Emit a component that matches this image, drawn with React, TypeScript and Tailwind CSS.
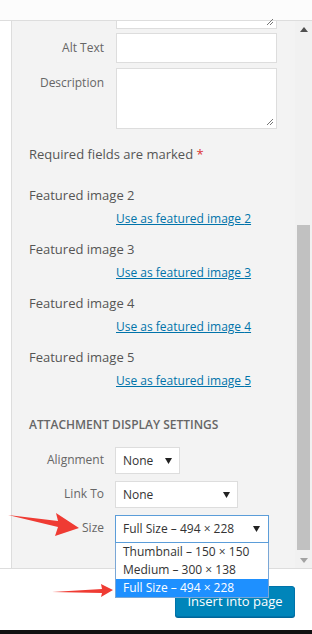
import React from 'react'

const font = { fontFamily: '"Open Sans", "Noto Sans", sans-serif' }

const Caret = () => (
    <svg width="7" height="6" viewBox="0 0 7 6" className="shrink-0">
        <path d="M0 0 H7 L3.5 6 Z" fill="#222" />
    </svg>
)

const Grip = () => (
    <svg width="7" height="7" viewBox="0 0 7 7" className="absolute right-[3px] bottom-[3px]">
        <path d="M1 7 L7 1 M4 7 L7 4" stroke="#777" strokeWidth="1" />
    </svg>
)

const Row = ({ label, children, top = 'pt-[6px]' }: { label: string; children: React.ReactNode; top?: string }) => (
    <div className="flex items-start">
        <div className={`w-[75px] text-right text-[12px] leading-[18px] text-[#666] ${top}`}>{label}</div>
        <div className="ml-[12px]">{children}</div>
    </div>
)

const Featured = ({ n }: { n: number }) => (
    <div className="flex flex-col">
        <div className="text-[13px] leading-[18px] text-[#555]">Featured image {n}</div>
        <a className="ml-[87px] mt-[6px] text-[12px] leading-[18px] text-[#0073aa] underline">Use as featured image {n}</a>
    </div>
)

const App = () => {
    return (
        <div className="relative w-[312px] h-[634px] bg-white overflow-hidden" style={font}>
            {/* top bar */}
            <div className="h-[21px] bg-[#fcfcfc] border-b border-[#dddddd]"></div>

            <div className="flex h-[547px]">
                <div className="w-[12px] bg-white border-r border-[#dddddd]"></div>

                {/* panel */}
                <div className="flex-1 bg-[#f3f3f3] pl-[17px]">
                    <div className="relative ml-[87px] w-[161px] h-[8px] bg-white border border-t-0 border-[#dddddd]">
                        <Grip />
                    </div>

                    <div className="mt-[4px] flex flex-col gap-[5px]">
                        <Row label="Alt Text">
                            <div className="w-[161px] h-[30px] bg-white border border-[#dddddd]"></div>
                        </Row>
                        <Row label="Description">
                            <div className="relative w-[161px] h-[61px] bg-white border border-[#dddddd]">
                                <Grip />
                            </div>
                        </Row>
                    </div>

                    <div className="mt-[16px] text-[13px] leading-[18px] text-[#555]">
                        Required fields are marked <span className="text-[#dc3232]">*</span>
                    </div>

                    <div className="mt-[23px] flex flex-col gap-[12px]">
                        <Featured n={2} />
                        <Featured n={3} />
                        <Featured n={4} />
                        <Featured n={5} />
                    </div>

                    <div className="mt-[27px] text-[12px] leading-[16px] font-semibold uppercase text-[#666]">Attachment Display Settings</div>

                    <div className="mt-[14px] flex flex-col gap-[7px]">
                        <Row label="Alignment" top="pt-[4px]">
                            <div className="-ml-[1px] w-[65px] h-[27px] bg-white border border-[#dddddd] flex items-center justify-between pl-[7px] pr-[7px] text-[12px] text-[#333]">
                                None <Caret />
                            </div>
                        </Row>
                        <Row label="Link To" top="pt-[4px]">
                            <div className="-ml-[1px] w-[123px] h-[27px] bg-white border border-[#dddddd] flex items-center justify-between pl-[7px] pr-[7px] text-[12px] text-[#333]">
                                None <Caret />
                            </div>
                        </Row>
                        <Row label="Size" top="pt-[4px]">
                            <div className="relative -ml-[1px]">
                                <div className="w-[154px] h-[28px] bg-white border border-[#5b9dd9] flex items-center justify-between pl-[7px] pr-[8px] text-[12px] text-[#333]">
                                    Full Size – 494 × 228 <Caret />
                                </div>
                                {/* open list */}
                                <div className="absolute left-0 top-[28px] z-20 w-[154px] bg-white border border-t-0 border-[#7aa7d6] text-[12px] leading-[18px] text-[#333]">
                                    <div className="px-[7px]">Thumbnail – 150 × 150</div>
                                    <div className="px-[7px]">Medium – 300 × 138</div>
                                    <div className="px-[7px] bg-[#1e90ff] text-white">Full Size – 494 × 228</div>
                                </div>
                            </div>
                        </Row>
                    </div>
                </div>

                {/* scrollbar */}
                <div className="w-[17px] bg-[#f1f1f1] flex flex-col items-center">
                    <svg width="8" height="5" viewBox="0 0 8 5" className="mt-[6px]">
                        <path d="M0 5 L4 0 L8 5 Z" fill="#505050" />
                    </svg>
                    <div className="mt-[193px] w-[13px] h-[325px] bg-[#c1c1c1]"></div>
                    <svg width="8" height="5" viewBox="0 0 8 5" className="mt-[8px]">
                        <path d="M0 0 L8 0 L4 5 Z" fill="#a3a3a3" />
                    </svg>
                </div>
            </div>

            {/* bottom toolbar */}
            <div className="h-[62px] bg-white border-t border-[#dddddd] flex justify-end items-start pt-[17px] pr-[17px]">
                <button className="w-[120px] h-[31px] bg-[#0085ba] border border-[#0073aa] rounded-[3px] text-white text-[13px] shadow-[0_1px_0_#006799]">
                    Insert into page
                </button>
            </div>
            <div className="h-[4px] bg-[#111]"></div>

            {/* annotation arrows */}
            <svg className="absolute left-0 top-0 z-30 pointer-events-none" width="312" height="634" viewBox="0 0 312 634">
                <path d="M8 515 L58 521 L56 513 L79 528 L55 536 L58 527 Z" fill="#ef3b33" />
                <path d="M52 592 L102 589 L101 584 L113 590 L101 597 L102 593 Z" fill="#ef3b33" />
            </svg>
        </div>
    )
}

export default App
